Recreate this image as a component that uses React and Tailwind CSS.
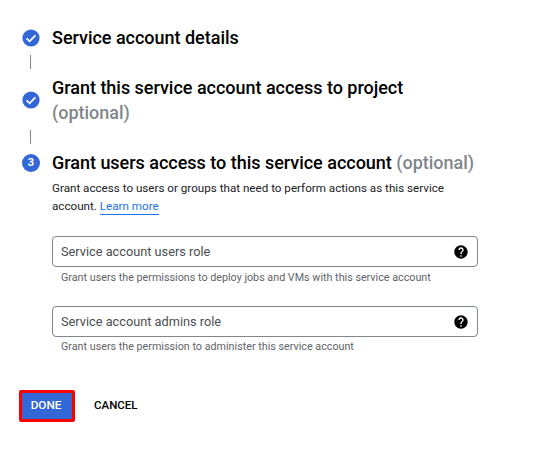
import React from 'react';

const CheckCircle = () => (
  <svg viewBox="0 0 18 18" className="w-[18px] h-[18px] shrink-0">
    <circle cx="9" cy="9" r="8.6" fill="#3367d6" />
    <path d="M4.6 9.3l3 3 5.8-6" fill="none" stroke="#fff" strokeWidth="1.8" />
  </svg>
);

const Connector = ({ className }) => <div className={`ml-[30px] w-px h-[14px] bg-[#80868b] ${className}`} />;

const HelpIcon = () => (
  <svg viewBox="0 0 24 24" className="w-4 h-4 shrink-0">
    <path
      fill="#000"
      d="M12 2C6.48 2 2 6.48 2 12s4.48 10 10 10 10-4.48 10-10S17.52 2 12 2zm1 17h-2v-2h2v2zm2.07-7.75l-.9.92C13.45 12.9 13 13.5 13 15h-2v-.5c0-1.1.45-2.1 1.17-2.83l1.24-1.26c.37-.36.59-.86.59-1.41 0-1.1-.9-2-2-2s-2 .9-2 2H8c0-2.21 1.79-4 4-4s4 1.79 4 4c0 .88-.36 1.68-.93 2.25z"
    />
  </svg>
);

const RoleField = ({ label, hint, className, hintClass }) => (
  <div className={className}>
    <div className="h-[31px] w-[426px] flex items-center justify-between pl-[8px] pr-[8px] border border-[#80868b] rounded-[4px]">
      <span className="text-[12.75px] text-[#4a4e52]">{label}</span>
      <HelpIcon />
    </div>
    <p className={`pl-[9px] text-[10.75px] leading-[16px] text-[#5f6368] ${hintClass}`}>{hint}</p>
  </div>
);

export default function App() {
  return (
    <div className="w-[555px] h-[458px] bg-white text-black font-['Roboto',sans-serif] overflow-hidden pt-[26px]">
      {/* Step 1 */}
      <div className="flex items-center gap-[12px] pl-[22px] h-[24px]">
        <CheckCircle />
        <h2 className="text-[18px] font-medium leading-[24px] -tracking-[0.02px]">Service account details</h2>
      </div>
      <Connector className="mt-[5px]" />

      {/* Step 2 */}
      <div className="flex items-center gap-[12px] pl-[22px] mt-[6px]">
        <CheckCircle />
        <h2 className="text-[18px] font-medium leading-[25px] -tracking-[0.02px]">
          Grant this service account access to project
          <br />
          <span className="text-[#80868b]">(optional)</span>
        </h2>
      </div>
      <Connector className="mt-[5px]" />

      {/* Step 3 */}
      <div className="flex items-center gap-[12px] pl-[22px] mt-[7px] h-[24px]">
        <div className="w-[18px] h-[18px] shrink-0 rounded-full bg-[#3367d6] flex items-center justify-center text-[11px] font-bold text-white">
          3
        </div>
        <h2 className="text-[18px] font-medium leading-[24px] -tracking-[0.02px] whitespace-nowrap">
          Grant users access to this service account <span className="text-[#80868b]">(optional)</span>
        </h2>
      </div>

      <div className="pl-[52px]">
        <p className="mt-[4px] w-[420px] text-[11.65px] leading-[18px] text-[#202124]">
          Grant access to users or groups that need to perform actions as this service account.{' '}
          <a className="text-[#1a73e8] border-b border-[#1a73e8] pb-px">Learn more</a>
        </p>
        <RoleField
          className="mt-[21px]"
          hintClass="mt-[3px]"
          label="Service account users role"
          hint="Grant users the permissions to deploy jobs and VMs with this service account"
        />
        <RoleField
          className="mt-[20px]"
          hintClass="mt-[2px]"
          label="Service account admins role"
          hint="Grant users the permission to administer this service account"
        />
      </div>

      {/* Actions */}
      <div className="flex items-center pl-[19px] mt-[35px]">
        <button className="w-[56px] h-[32px] bg-[#3367d6] border-[3px] border-[#f00] rounded-[2px] pr-[2px] text-white text-[11.75px] font-medium">
          DONE
        </button>
        <button className="ml-[19px] text-[11.5px] font-medium text-black">CANCEL</button>
      </div>
    </div>
  );
}
